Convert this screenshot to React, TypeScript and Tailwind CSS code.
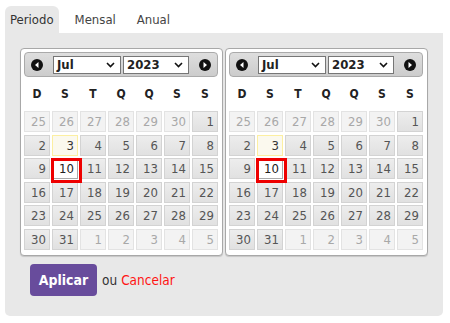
import React from 'react';

type Day = { n: number; kind?: 'other' | 'today' | 'selected' };

const weeks: Day[][] = [
  [{ n: 25, kind: 'other' }, { n: 26, kind: 'other' }, { n: 27, kind: 'other' }, { n: 28, kind: 'other' }, { n: 29, kind: 'other' }, { n: 30, kind: 'other' }, { n: 1 }],
  [{ n: 2 }, { n: 3, kind: 'today' }, { n: 4 }, { n: 5 }, { n: 6 }, { n: 7 }, { n: 8 }],
  [{ n: 9 }, { n: 10, kind: 'selected' }, { n: 11 }, { n: 12 }, { n: 13 }, { n: 14 }, { n: 15 }],
  [{ n: 16 }, { n: 17 }, { n: 18 }, { n: 19 }, { n: 20 }, { n: 21 }, { n: 22 }],
  [{ n: 23 }, { n: 24 }, { n: 25 }, { n: 26 }, { n: 27 }, { n: 28 }, { n: 29 }],
  [{ n: 30 }, { n: 31 }, { n: 1, kind: 'other' }, { n: 2, kind: 'other' }, { n: 3, kind: 'other' }, { n: 4, kind: 'other' }, { n: 5, kind: 'other' }],
];

const dayNames = ['D', 'S', 'T', 'Q', 'Q', 'S', 'S'];

const Chevron = () => (
  <svg width="9" height="6" viewBox="0 0 9 6">
    <path d="M1 1l3.5 3.5L8 1" fill="none" stroke="#111" strokeWidth="1.6" />
  </svg>
);

const CircleArrow = ({ dir }: { dir: 'prev' | 'next' }) => (
  <svg width="12" height="12" viewBox="0 0 12 12">
    <circle cx="6" cy="6" r="6" fill="#111" />
    {dir === 'prev' ? <path d="M7.5 3v6L4 6z" fill="#fff" /> : <path d="M4.5 3v6L8 6z" fill="#fff" />}
  </svg>
);

const Select = ({ value, width }: { value: string; width: string }) => (
  <div className={`${width} h-[18px] bg-white border border-[#767676] flex items-center justify-between pl-[3px] pr-[5px] text-[13px] font-bold text-[#222]`}>
    <span>{value}</span>
    <Chevron />
  </div>
);

const Cell = ({ d }: { d: Day }) => {
  const base = 'h-[21px] border flex items-center justify-end pr-[3px] text-[13px] leading-none';
  if (d.kind === 'other') {
    return <div className={`${base} border-[#e3e3e3] bg-[#f3f3f3] text-[#a8a8a8]`}>{d.n}</div>;
  }
  if (d.kind === 'today') {
    return <div className={`${base} border-[#fcefa1] bg-[#fbf9ee] text-[#363636]`}>{d.n}</div>;
  }
  if (d.kind === 'selected') {
    return (
      <div className="relative">
        <div className={`${base} border-[#aaaaaa] bg-white text-[#212121]`}>{d.n}</div>
        <div className="absolute left-[-1px] top-0 w-[31px] h-[25px] border-[3px] border-[#ee0000]" />
      </div>
    );
  }
  return <div className={`${base} border-[#d3d3d3] bg-gradient-to-b from-[#ededed] to-[#e1e1e1] text-[#555555]`}>{d.n}</div>;
};

const Calendar = () => (
  <div className="w-[203px] h-[208px] bg-white border border-[#a8a8a8] rounded-[4px] p-[3px] shadow-[0_1px_1px_rgba(0,0,0,0.15)]">
    <div className="w-[194px] h-[25px] border border-[#aaaaaa] rounded-[4px] bg-gradient-to-b from-[#dedede] to-[#cccccc] flex items-center pl-[6px] pr-[6px]">
      <CircleArrow dir="prev" />
      <div className="ml-[10px] flex gap-[2px]">
        <Select value="Jul" width="w-[68px]" />
        <Select value="2023" width="w-[66px]" />
      </div>
      <div className="ml-auto">
        <CircleArrow dir="next" />
      </div>
    </div>
    <div className="w-[194px] h-[34px] grid grid-cols-7 gap-x-[2px] items-center text-[12px] font-bold text-[#222]">
      {dayNames.map((n, i) => (
        <div key={i} className="text-center">{n}</div>
      ))}
    </div>
    <div className="w-[194px] grid grid-cols-7 gap-x-[2px] gap-y-[2.6px]">
      {weeks.flat().map((d, i) => (
        <Cell key={i} d={d} />
      ))}
    </div>
  </div>
);

export default function App() {
  return (
    <div className="w-[450px] h-[323px] bg-white font-['DejaVu_Sans_Condensed','DejaVu_Sans',sans-serif] text-[#333]">
      <div className="pl-[5px] pt-[6px] flex gap-[11px] text-[13px]">
        <div className="h-[27px] px-[5px] bg-[#e8e8e8] rounded-t-[6px] flex items-center text-[#333]">Periodo</div>
        <div className="h-[27px] px-[5px] flex items-center text-[#444]">Mensal</div>
        <div className="h-[27px] px-[5px] flex items-center text-[#444]">Anual</div>
      </div>
      <div className="ml-[5px] w-[438px] h-[283px] bg-[#e8e8e8] rounded-b-[5px] pt-[15px] pl-[15px]">
        <div className="flex gap-[2px]">
          <Calendar />
          <Calendar />
        </div>
        <div className="mt-[8px] ml-[10px] flex items-center">
          <button className="w-[67px] h-[32px] rounded-[4px] bg-[#684c9c] text-white font-bold text-[14px]">Aplicar</button>
          <span className="ml-[5px] text-[13.5px] text-[#333]">ou</span>
          <span className="ml-[4px] text-[13.5px] text-[#ff1414]">Cancelar</span>
        </div>
      </div>
    </div>
  );
}
